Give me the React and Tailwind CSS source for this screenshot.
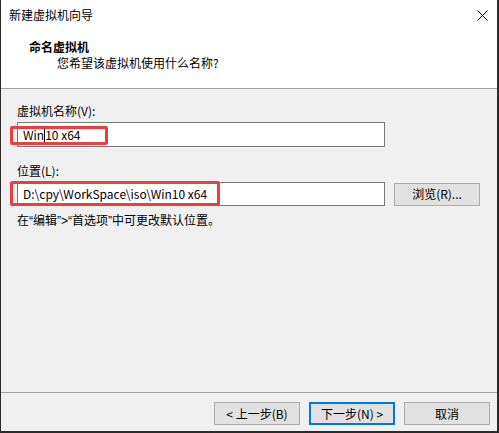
import React from "react";

const font = "font-['Noto_Sans_CJK_SC','Noto_Sans',sans-serif]";
const latin = "font-['Liberation_Sans',sans-serif]";

const Button = ({ children, primary }) => (
  <button
    className={
      primary
        ? "w-[86px] h-[23px] bg-[#e1e1e1] border-2 border-[#0078d7] text-[12px] leading-[16px] text-black"
        : "w-[86px] h-[23px] bg-[#e1e1e1] border border-[#adadad] text-[12px] leading-[16px] text-black"
    }
  >
    {children}
  </button>
);

export default function App() {
  return (
    <div
      className={`${font} w-[499px] h-[433px] flex flex-col bg-[#f0f0f0] border-l border-r-2 border-b-2 border-[#2b2b2b] text-[12px] leading-[16px] text-black`}
    >
      {/* title bar + header */}
      <div className="h-[89px] bg-white border-b border-[#a0a0a0] flex flex-col">
        <div className="h-[30px] flex items-center justify-between pl-[8px] pr-[9px]">
          <span>新建虚拟机向导</span>
          <svg width="11" height="11" viewBox="0 0 11 11">
            <path d="M0.5 0.5 L10.5 10.5 M10.5 0.5 L0.5 10.5" stroke="#000" strokeWidth="1" />
          </svg>
        </div>
        <div className="pl-[28px] pt-[9px]">
          <div className="font-bold">命名虚拟机</div>
          <div className="pl-[28px]">您希望该虚拟机使用什么名称?</div>
        </div>
      </div>

      {/* body */}
      <div className="flex-1 px-[16px] pt-[14px]">
        <div>虚拟机名称(V):</div>
        <div className="relative mt-[3px] w-[368px] h-[25px] bg-white border border-[#7a7a7a] flex items-center pl-[5px]">
          <span>Win</span>
          <span className="w-px h-[15px] bg-black" />
          <span>10 x64</span>
          <div className="absolute left-[-8px] top-[3px] w-[98px] h-[19px] border-[3px] border-[#e8403f] rounded-[2px]" />
        </div>

        <div className="mt-[16px]">位置(L):</div>
        <div className="mt-[3px] flex items-center">
          <div className="relative w-[368px] h-[24px] bg-white border border-[#7a7a7a] flex items-center pl-[5px]">
            <span>D:\cpy\WorkSpace\iso\Win10 x64</span>
            <div className="absolute left-[-8px] top-[-2px] w-[210px] h-[25px] border-[3px] border-[#e8403f] rounded-[2px]" />
          </div>
          <div className="ml-[9px]">
            <Button>浏览(R)...</Button>
          </div>
        </div>

        <div className="mt-[6px]">
          在<span className={latin}>“</span>编辑<span className={latin}>”&gt;“</span>首选项<span className={latin}>”</span>中可更改默认位置。
        </div>
      </div>

      {/* footer */}
      <div className="h-[39px] border-t border-[#a0a0a0] flex justify-end items-start pt-[9px] pr-[7px] gap-[9px]">
        <Button>&lt; 上一步(B)</Button>
        <Button primary>下一步(N) &gt;</Button>
        <Button>取消</Button>
      </div>
    </div>
  );
}
